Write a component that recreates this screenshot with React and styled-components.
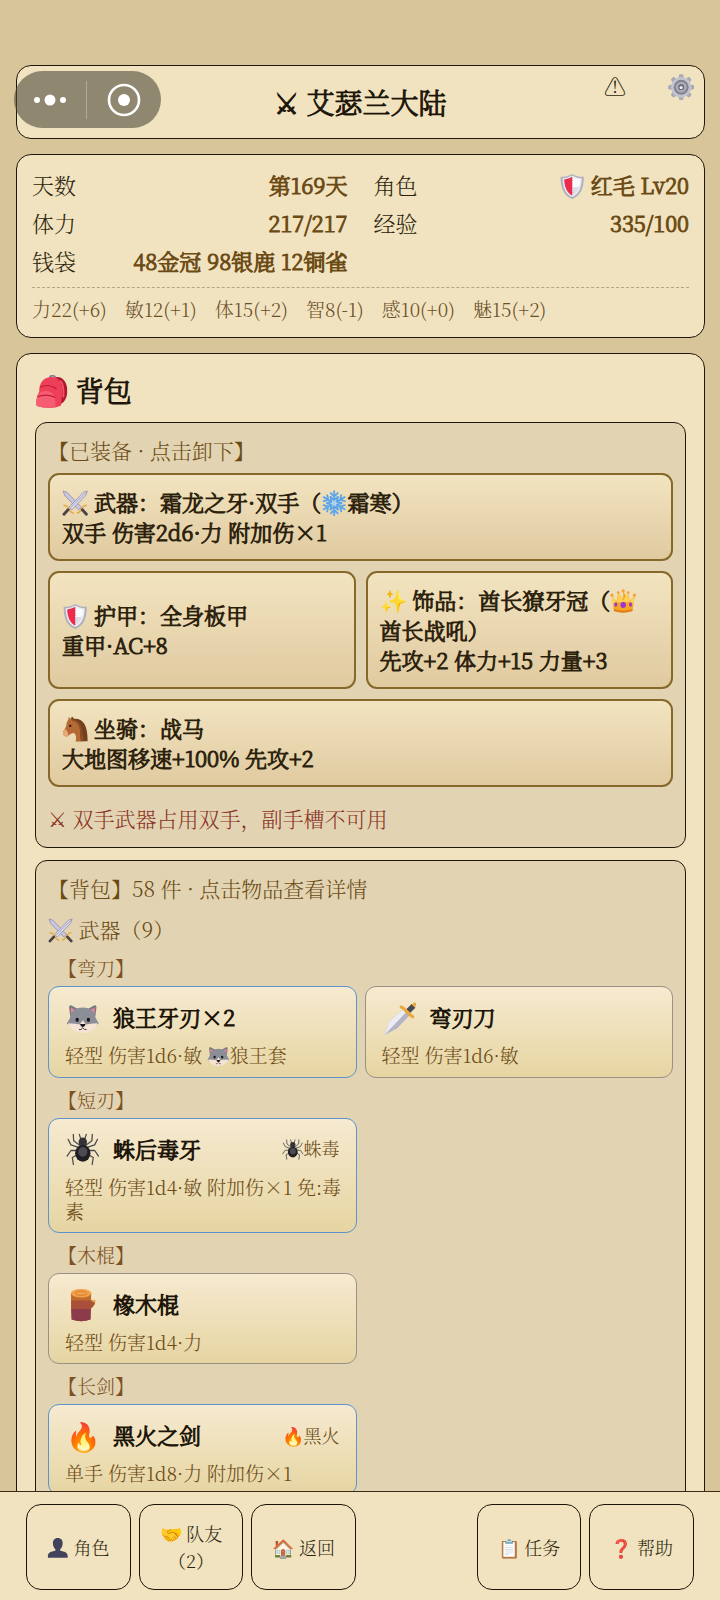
import React from "react";
import styled, { createGlobalStyle, css } from "styled-components";

const GlobalStyle = createGlobalStyle`
  * { box-sizing: border-box; }
  html, body { margin: 0; height: 100%; background: #d8c599; }
  body, button {
    font-family: "Noto Serif CJK SC", "Source Han Serif SC", "Liberation Serif", "Noto Sans CJK SC", serif;
    font-weight: 300;
  }
  button { cursor: pointer; }
`;

const strong = css`
  font-weight: 300;
  -webkit-text-stroke: 1px currentColor;
`;

const Page = styled.div`
  height: 100vh;
  display: flex;
  flex-direction: column;
  color: #2c1f0c;
  background: #d8c599;
`;

const Scroller = styled.main`
  flex: 1;
  min-height: 0;
  overflow-y: auto;
  scrollbar-width: none;
  padding: 65px 15px 16px 16px;
`;

const Panel = styled.section`
  border: 1px solid #1f170a;
  border-radius: 15px;
  background: #f1e3c0;
`;

const Header = styled(Panel)`
  position: relative;
  display: grid;
  grid-template-columns: 1fr auto 1fr;
  min-height: 74px;
  margin-bottom: 15px;
`;

const Title = styled.h1`
  grid-column: 2;
  align-self: center;
  margin: 0;
  font-size: 28px;
  line-height: 40px;
  color: #1c1408;
  ${strong}
`;

const HeaderTools = styled.div`
  display: flex;
  justify-content: flex-end;
  align-items: flex-start;
  gap: 38px;
  padding: 6px 9px;
`;

const ToolButton = styled.button`
  width: 28px;
  height: 28px;
  padding: 0;
  border: 0;
  background: none;
  font-size: 22px;
  line-height: 28px;
  color: #2c1f0c;
`;

const Capsule = styled.div`
  position: absolute;
  left: -3px;
  top: 5px;
  width: 147px;
  height: 57px;
  border-radius: 29px;
  background: rgba(80, 74, 60, 0.6);
  display: grid;
  grid-template-columns: 72px 1px 1fr;
  align-items: center;
`;

const CapsuleButton = styled.button`
  display: flex;
  justify-content: center;
  padding: 0;
  border: 0;
  background: none;
`;

const CapsuleDivider = styled.span`
  height: 38px;
  background: rgba(255, 255, 255, 0.3);
`;

const Stats = styled(Panel)`
  padding: 11px 15px 13px;
  margin-bottom: 15px;
`;

const StatGrid = styled.dl`
  display: grid;
  grid-template-columns: 1fr 1fr;
  column-gap: 26px;
  margin: 0 0 7px;
`;

const Stat = styled.div`
  display: flex;
  justify-content: space-between;
  font-size: 22px;
  line-height: 38px;
  white-space: nowrap;
  dt { color: #2c1f0c; }
  dd { margin: 0; color: #6b4a14; ${strong} }
`;

const Attributes = styled.ul`
  display: flex;
  gap: 18px;
  margin: 0;
  padding: 6px 0 0;
  border-top: 1px dashed #b9a579;
  list-style: none;
  font-size: 19px;
  line-height: 30px;
  color: #6b4f28;
`;

const Bag = styled(Panel)`
  padding: 16px 18px 18px;
`;

const BagTitle = styled.h2`
  margin: 0 0 12px;
  font-size: 28px;
  line-height: 40px;
  color: #1c1408;
  ${strong}
`;

const Box = styled.section`
  border: 1px solid #1f170a;
  border-radius: 12px;
  background: #e2d4b2;
  padding: 12px 12px 14px;
  margin-bottom: 12px;
`;

const Caption = styled.h3`
  margin: 0 0 8px;
  font-size: 21px;
  line-height: 30px;
  font-weight: 300;
  color: #6b4a14;
`;

const Category = styled.h4`
  margin: 11px 0 10px;
  font-size: 21px;
  line-height: 30px;
  font-weight: 300;
  color: #6b4a14;
`;

const Group = styled.h5`
  margin: 8px 0 4px;
  padding-left: 10px;
  font-size: 19px;
  line-height: 28px;
  font-weight: 300;
  color: #7d5124;
`;

const EquipGrid = styled.div`
  display: grid;
  grid-template-columns: 1fr 1fr;
  gap: 10px;
`;

const EquipCard = styled.button`
  grid-column: ${(p) => (p.$wide ? "1 / -1" : "auto")};
  padding: 12px 18px 12px 12px;
  border: 2px solid #86692a;
  border-radius: 11px;
  background: linear-gradient(#f2e4c0, #e0caa0);
  text-align: left;
  font-size: 22px;
  line-height: 30px;
  color: #2c1f0c;
  ${strong}
`;

const EquipLine = styled.span`
  display: block;
`;

const Warning = styled.p`
  margin: 16px 0 0;
  font-size: 21px;
  line-height: 30px;
  color: #8a3226;
`;

const ItemGrid = styled.div`
  display: grid;
  grid-template-columns: 1fr 1fr;
  gap: 8px;
`;

const ItemCard = styled.button`
  display: flex;
  flex-direction: column;
  justify-content: flex-start;
  gap: 8px;
  padding: 12px 12px 9px 16px;
  border: 1px solid ${(p) => (p.$rare ? "#5c93cc" : "#9a9086")};
  border-radius: 11px;
  background: linear-gradient(#f6ead0, #e6d5a2);
  text-align: left;
`;

const ItemHead = styled.span`
  display: flex;
  align-items: center;
  align-self: stretch;
  gap: 12px;
  height: 36px;
  padding-right: 4px;
`;

const ItemIcon = styled.span`
  width: 36px;
  text-align: center;
  font-size: 28px;
  line-height: 36px;
`;

const ItemName = styled.span`
  flex: 1;
  font-size: 22px;
  line-height: 36px;
  color: #1c1408;
  ${strong}
`;

const ItemText = styled.span`
  font-size: ${(p) => (p.$tag ? 18 : 19)}px;
  line-height: 24px;
  color: #6b4a14;
`;

const TabBar = styled.nav`
  display: grid;
  grid-template-columns: repeat(6, 1fr);
  gap: 8px;
  padding: 12px 26px 10px;
  border-top: 1px solid #3a2c16;
  background: #f1e3c0;
`;

const Tab = styled.button`
  grid-column: ${(p) => p.$column};
  height: 86px;
  padding: 0 16px;
  border: 1px solid #1c1408;
  border-radius: 15px;
  background: transparent;
  font-size: 18px;
  line-height: 27px;
  color: #2c1f0c;
`;

const Glyph = styled.svg`
  width: 1.2em;
  height: 1.2em;
  vertical-align: -0.24em;
`;

const Swords = () => (
  <Glyph viewBox="0 0 24 24">
    <path d="M1 1l3.5 1L18 16l-3 2L2.5 5z" fill="#c9c6de" stroke="#8d88aa" strokeWidth=".7" />
    <path d="M23 1l-3.500 1L6 16l3 2L21.500 5z" fill="#dcdaea" stroke="#8d88aa" strokeWidth=".7" />
    <path d="M22 2L7 17" stroke="#9c98b8" strokeWidth=".8" />
    <path d="M2 14q3 .5 4 3t4 4M22 14q-3 .5-4 3t-4 4" fill="none" stroke="#e5ab43" strokeWidth="1.500" strokeLinecap="round" strokeDasharray="2.500 1" />
    <path d="M5.500 18L1.800 22M18.500 18l3.700 4" stroke="#4c4148" strokeWidth="2.600" strokeLinecap="round" />
  </Glyph>
);

const Shield = () => (
  <Glyph viewBox="0 0 24 24">
    <path d="M12 .8c3 1.900 6.500 2.700 10.500 2.700C22.700 13 20 20.500 12 23.700 4 20.500 1.300 13 1.500 3.500 5.500 3.500 9 2.700 12 .8z" fill="#aeb1bb" />
    <path d="M12 2.200c2.600 1.500 5.500 2.300 8.700 2.500C20.600 13 18.200 19 12 21.900 5.800 19 3.400 13 3.300 4.700 6.500 4.500 9.400 3.700 12 2.200z" fill="#e9eaf0" />
    <path d="M12 3.500v17C7.300 18 5 13 4.700 5.900 7.400 5.600 9.700 4.900 12 3.500z" fill="#ee2a4d" />
    <path d="M12 3.500c2.300 1.400 4.600 2.100 7.300 2.400C19 13 16.700 18 12 20.500z" fill="#fafafc" />
    <path d="M12 13v7.500c3-1.600 5.200-4.300 6.300-8z" fill="#dcdde5" />
    <path d="M12 4v16" stroke="#c93a55" strokeWidth=".6" strokeDasharray="1.200 1" />
  </Glyph>
);

const Snow = () => (
  <Glyph viewBox="0 0 24 24">
    <g stroke="#5ba6ea" strokeWidth="1.700" strokeLinecap="round" fill="none">
      {[0, 60, 120, 180, 240, 300].map((a) => (
        <path key={a} transform={`rotate(${a} 12 12)`} d="M12 12V1M8.800 2.800L12 5.800l3.200-3M8.800 6.300l3.200 3 3.200-3" />
      ))}
    </g>
    <circle cx="12" cy="12" r="2.200" fill="#a9d4f8" />
  </Glyph>
);

const Crown = () => (
  <Glyph viewBox="0 0 24 24">
    <path d="M1.500 7l4.500 5 1.500-7.500L12 10l0-7 4.500 7V4.500L18 12l4.500-5-2 13.500q-8.500 3-17 0z" fill="#f6a823" />
    <path d="M1.500 7l4.800 6L8 4.500l4 7 4-7 1.700 8.500L22.500 7l-1 7q-9.500-3-19 0z" fill="#ffd257" />
    <path d="M3.400 19q8.600 2.800 17.200 0l-.3 2.200q-8.300 2.600-16.600 0z" fill="#e27c1a" />
    <circle cx="12" cy="2.700" r="1.500" fill="#f3a33a" />
    <circle cx="1.800" cy="6.500" r="1.400" fill="#f3a33a" />
    <circle cx="22.200" cy="6.500" r="1.400" fill="#f3a33a" />
    <circle cx="7.500" cy="4.200" r="1.200" fill="#f3a33a" />
    <circle cx="16.500" cy="4.200" r="1.200" fill="#f3a33a" />
    <ellipse cx="12" cy="15.500" rx="2.500" ry="2.700" fill="#9a35d6" />
    <ellipse cx="5.300" cy="15" rx="1.300" ry="2" fill="#9a35d6" />
    <ellipse cx="18.700" cy="15" rx="1.300" ry="2" fill="#9a35d6" />
  </Glyph>
);

const Horse = () => (
  <Glyph viewBox="0 0 24 24">
    <path d="M8 3l1-2.500L11 2.500C19 2 23.500 8 23.300 23H12.500c1-3 .6-5.500-.7-7z" fill="#74401e" />
    <path d="M6 .8L9 3.500c4.500.5 7.300 4 7.300 9 0 4 .7 7 1.200 10.500h-5c.8-3.500.3-5.700-1.300-7.500-2.200.2-4 .8-5.700 2.700C3.700 19.200.8 18 .8 15.500c0-2.200 2.700-3.700 3.200-7.500.2-2 .7-3.600 1.800-4.700z" fill="#b66a33" />
    <path d="M.8 15.500c0-1.500 1-2.500 2-3.700 1.500 1 2.700 2.500 3 6C3.700 19.200.8 18 .8 15.500z" fill="#e8a877" />
    <path d="M9 3c5 .5 8.500 4 9 9.500l2 10.500h-3c-.5-4-.2-7-.7-10.500C15.800 8.500 13.500 5 9 4z" fill="#8b4f26" />
    <circle cx="7.500" cy="9" r="1" fill="#1d0f08" />
  </Glyph>
);

const Wolf = () => (
  <Glyph viewBox="0 0 24 24">
    <path d="M3 10L2.200 3.500q.2-1.500 1.800-1l4.500 2.500h7l4.500-2.500q1.600-.5 1.800 1L21 10z" fill="#777a82" />
    <path d="M3.600 8L3.500 4l4 2.300zM20.400 8l.1-4-4 2.300z" fill="#ee8296" />
    <path d="M12 4c5.500 0 8.700 3.300 9.200 7.500L23.500 15.500 12 20 .5 15.500l2.300-4C3.300 7.300 6.500 4 12 4z" fill="#8b8e96" />
    <path d="M1.500 15.200l5 .3 3.300.6L12 13l2.200 3.100 3.300-.6 5-.3C20.800 19.500 17 22 12 22S3.200 19.500 1.500 15.200z" fill="#f5e4d6" />
    <ellipse cx="8" cy="12.700" rx="1.200" ry="1.500" fill="#16161a" />
    <ellipse cx="16" cy="12.700" rx="1.200" ry="1.500" fill="#16161a" />
    <path d="M10 15.800h4q-.3 2-2 2.300-1.700-.3-2-2.300z" fill="#16161a" />
    <path d="M9.300 19.700q1.500.6 2.700-1.300 1.200 1.900 2.700 1.300" fill="none" stroke="#463a38" strokeWidth=".7" />
  </Glyph>
);

const Dagger = () => (
  <Glyph viewBox="0 0 24 24">
    <path d="M1 23.500L4.500 14 14.500 5l4.500 4.500-9 9.500z" fill="#b4b4c4" />
    <path d="M1 23.500L4.500 14 14.500 5l2.200 2.200z" fill="#ececf4" />
    <path d="M18 6.500L21.800 2.700" stroke="#4b4a52" strokeWidth="3.800" />
    <path d="M13 3.600q1.500.3 3 2.400 2.200 2.300 5.200 4.600" fill="none" stroke="#e9a83a" strokeWidth="2.200" strokeLinecap="round" />
    <circle cx="22.500" cy="1.800" r="1.500" fill="#e9a83a" />
  </Glyph>
);

const Spider = () => (
  <Glyph viewBox="0 0 24 24">
    <g fill="none" stroke="#4a4a4e" strokeWidth=".9" strokeLinecap="round" strokeLinejoin="round">
      <path d="M10 9L5.500 5.500 5.200 1M14 9l4.500-3.500.3-4.500" />
      <path d="M9.500 10.500L3.500 8.500 1.500 4.500M14.500 10.500l6-2 2-4" />
      <path d="M9 12.500l-5.500 0L.8 16.500M15 12.500l5.500 0 2.700 4" />
      <path d="M9 15l-4.500 2.500.8 5M15 15l4.500 2.500-.8 5" />
      <path d="M10.500 4L9.500 1M13.500 4l1-3" />
    </g>
    <ellipse cx="12" cy="6.500" rx="3" ry="3.300" fill="#333338" />
    <ellipse cx="12" cy="14.500" rx="5.500" ry="6" fill="#202024" />
    <ellipse cx="12" cy="13.500" rx="3.200" ry="3.500" fill="#4c4c52" />
  </Glyph>
);

const Log = () => (
  <Glyph viewBox="0 0 24 24">
    <path d="M16 11l2.500-2.500 2.300.8q.3 3.700-4.800 6.700z" fill="#a8552c" />
    <ellipse cx="20" cy="9.300" rx="1.300" ry=".9" fill="#f0a457" />
    <path d="M3.500 3.500h14.500l-.5 19Q11 25 4 22.500z" fill="#c06a2c" />
    <path d="M3.600 9h14.200l-.1 7H3.800z" fill="#a8503a" />
    <path d="M3.700 15h14.100l-.3 7.500Q11 25 4 22.500z" fill="#8c3b4a" />
    <ellipse cx="10.800" cy="3.800" rx="7.300" ry="3" fill="#f2a04a" />
    <ellipse cx="10.800" cy="3.800" rx="4" ry="1.500" fill="none" stroke="#d27a2c" strokeWidth=".6" />
  </Glyph>
);

const Backpack = () => (
  <Glyph viewBox="0 0 24 24">
    <path d="M10.500 2.500q0-2 2-2t2.500 2" fill="none" stroke="#7b8490" strokeWidth="1.300" />
    <path d="M15 1.500c5-.5 8.500 4 8 11-.2 4-2 7-5 8.500z" fill="#b5162f" />
    <path d="M18 4q3 3 2.200 12" fill="none" stroke="#f0556c" strokeWidth="1.300" />
    <path d="M3 12C3 5 6.500 1.500 12 1.500S19.500 6 19.500 12l-1 10q-8 3-17.300.2-1.200-6 1.800-10.200z" fill="#ee3f58" />
    <path d="M1 22C.5 14 3.500 11.500 8 11.500s7 3 6.500 11.500q-7 1-13.500-1z" fill="#f75d72" />
    <path d="M3.500 9Q9 5.500 15.500 10M2 15.500q6-2.500 12.500.5" fill="none" stroke="#bd1c38" strokeWidth=".8" />
  </Glyph>
);

const Gear = () => (
  <Glyph viewBox="0 0 24 24">
    {[0, 45, 90, 135, 180, 225, 270, 315].map((a) => (
      <path key={a} transform={`rotate(${a} 12 12)`} d="M9.500 4.500l.7-4q1.800-.6 3.600 0l.7 4z" fill="#a7a9b4" />
    ))}
    <circle cx="12" cy="12" r="9.300" fill="#c3c4cd" />
    <circle cx="12" cy="12" r="6.800" fill="#80828f" />
    <circle cx="12" cy="12" r="5" fill="#a9abb8" />
    <circle cx="12" cy="12" r="2.600" fill="#62646f" />
    <circle cx="12" cy="12.300" r="1.500" fill="#e9e9ee" />
  </Glyph>
);

const Person = () => (
  <Glyph viewBox="0 0 24 24">
    <path d="M12 1c3.700 0 5.700 2.500 5.400 6.500-.2 3-1.200 4.800-2.700 5.800v1.900c4.500.9 8.300 1.800 8.300 5.800v2H1v-2c0-4 3.800-4.900 8.300-5.800v-1.900c-1.500-1-2.500-2.800-2.700-5.800C6.300 3.500 8.300 1 12 1z" fill="#43425c" />
  </Glyph>
);

const stats = [
  ["天数", "第169天"],
  ["角色", <><Shield /> 红毛 Lv20</>],
  ["体力", "217/217"],
  ["经验", "335/100"],
  ["钱袋", "48金冠 98银鹿 12铜雀"],
];

const attributes = ["力22(+6)", "敏12(+1)", "体15(+2)", "智8(-1)", "感10(+0)", "魅15(+2)"];

const equipment = [
  { id: "weapon", wide: true, name: <><Swords /> 武器：霜龙之牙·双手（<Snow />霜寒）</>, effect: "双手 伤害2d6·力 附加伤×1" },
  { id: "armor", name: <><Shield /> 护甲：全身板甲</>, effect: "重甲·AC+8" },
  { id: "trinket", name: <>✨ 饰品：酋长獠牙冠（<Crown />酋长战吼）</>, effect: "先攻+2 体力+15 力量+3" },
  { id: "mount", wide: true, name: <><Horse /> 坐骑：战马</>, effect: "大地图移速+100% 先攻+2" },
];

const groups = [
  {
    name: "【弯刀】",
    items: [
      { icon: <Wolf />, name: "狼王牙刃×2", text: <>轻型 伤害1d6·敏 <Wolf />狼王套</>, rare: true },
      { icon: <Dagger />, name: "弯刃刀", text: "轻型 伤害1d6·敏" },
    ],
  },
  {
    name: "【短刃】",
    items: [
      { icon: <Spider />, name: "蛛后毒牙", tag: <><Spider />蛛毒</>, text: "轻型 伤害1d4·敏 附加伤×1 免:毒素", rare: true },
    ],
  },
  { name: "【木棍】", items: [{ icon: <Log />, name: "橡木棍", text: "轻型 伤害1d4·力" }] },
  {
    name: "【长剑】",
    items: [{ icon: "🔥", name: "黑火之剑", tag: "🔥黑火", text: "单手 伤害1d8·力 附加伤×1", rare: true }],
  },
];

const tabs = [
  { column: 1, label: <><Person /> 角色</> },
  { column: 2, label: "🤝 队友（2）" },
  { column: 3, label: "🏠 返回" },
  { column: 5, label: "📋 任务" },
  { column: 6, label: "❓ 帮助" },
];

export default function App() {
  return (
    <Page>
      <GlobalStyle />
      <Scroller>
        <Header as="header">
          <Title>⚔︎ 艾瑟兰大陆</Title>
          <HeaderTools>
            <ToolButton aria-label="警告">⚠︎</ToolButton>
            <ToolButton aria-label="设置"><Gear /></ToolButton>
          </HeaderTools>
          <Capsule>
            <CapsuleButton aria-label="更多">
              <svg width="34" height="14" viewBox="0 0 34 14" fill="#fff">
                <circle cx="4" cy="7" r="3" />
                <circle cx="17" cy="7" r="5.500" />
                <circle cx="30" cy="7" r="3" />
              </svg>
            </CapsuleButton>
            <CapsuleDivider />
            <CapsuleButton aria-label="关闭">
              <svg width="34" height="34" viewBox="0 0 34 34">
                <circle cx="17" cy="17" r="15" fill="none" stroke="#fff" strokeWidth="2.600" />
                <circle cx="17" cy="17" r="6" fill="#fff" />
              </svg>
            </CapsuleButton>
          </Capsule>
        </Header>

        <Stats>
          <StatGrid>
            {stats.map(([name, value]) => (
              <Stat key={name}>
                <dt>{name}</dt>
                <dd>{value}</dd>
              </Stat>
            ))}
          </StatGrid>
          <Attributes>
            {attributes.map((a) => (
              <li key={a}>{a}</li>
            ))}
          </Attributes>
        </Stats>

        <Bag>
          <BagTitle><Backpack /> 背包</BagTitle>
          <Box>
            <Caption>【已装备 · 点击卸下】</Caption>
            <EquipGrid>
              {equipment.map((e) => (
                <EquipCard key={e.id} $wide={e.wide}>
                  <EquipLine>{e.name}</EquipLine>
                  <EquipLine>{e.effect}</EquipLine>
                </EquipCard>
              ))}
            </EquipGrid>
            <Warning>⚔︎ 双手武器占用双手，副手槽不可用</Warning>
          </Box>
          <Box>
            <Caption>【背包】58 件 · 点击物品查看详情</Caption>
            <Category><Swords /> 武器（9）</Category>
            {groups.map((g) => (
              <React.Fragment key={g.name}>
                <Group>{g.name}</Group>
                <ItemGrid>
                  {g.items.map((item) => (
                    <ItemCard key={item.name} $rare={item.rare}>
                      <ItemHead>
                        <ItemIcon>{item.icon}</ItemIcon>
                        <ItemName>{item.name}</ItemName>
                        {item.tag && <ItemText $tag>{item.tag}</ItemText>}
                      </ItemHead>
                      <ItemText>{item.text}</ItemText>
                    </ItemCard>
                  ))}
                </ItemGrid>
              </React.Fragment>
            ))}
          </Box>
        </Bag>
      </Scroller>
      <TabBar>
        {tabs.map((t) => (
          <Tab key={t.column} $column={t.column}>
            {t.label}
          </Tab>
        ))}
      </TabBar>
    </Page>
  );
}
